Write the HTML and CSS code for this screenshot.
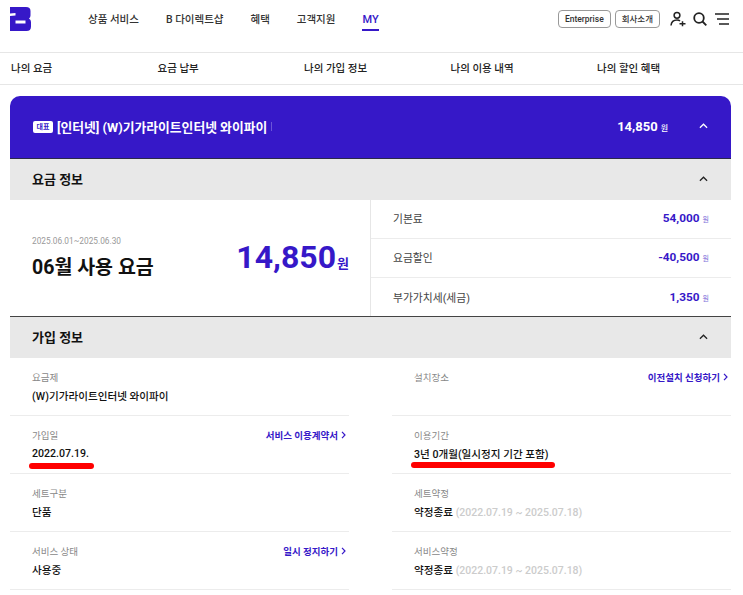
FILE: index.html
```html
<!DOCTYPE html>
<html lang="ko">
<head>
    <meta charset="UTF-8">
    <meta name="viewport" content="width=device-width, initial-scale=1.0">
    <title>MY 요금</title>
    <link rel="stylesheet" href="styles.css">
</head>
<body>
    <header class="header">
        <svg class="logo" viewBox="0 0 21 24"><path fill-rule="evenodd" fill="#3618c8" d="M0 0H16Q20.500 0 20.500 4V8.500Q20.500 10.500 19 11.500Q21 12.500 21 15V19.500Q21 24 16.500 24H0V9L5.500 8.500V6L0 6.500ZM5.500 13.500V16.500H15.500V13.500Z"/></svg>
        <nav class="gnb">
            <a>상품 서비스</a>
            <a>B 다이렉트샵</a>
            <a>혜택</a>
            <a>고객지원</a>
            <a class="on">MY</a>
        </nav>
        <div class="util">
            <span class="chip">Enterprise</span>
            <span class="chip">회사소개</span>
            <svg class="ico user" viewBox="0 0 16 16" fill="none" stroke="#222" stroke-width="1.500"><circle cx="7" cy="4.300" r="2.900"/><path d="M1 14.500Q1.500 9 7 9Q9 9 10 10"/><path d="M9.500 12.700H15.500M12.500 10.200V15.200"/></svg>
            <svg class="ico search" viewBox="0 0 14 14" fill="none" stroke="#222" stroke-width="1.800"><circle cx="6" cy="6" r="4.800"/><path d="M9.500 9.500L13.300 13.300"/></svg>
            <svg class="ico menu" viewBox="0 0 14 12" fill="none" stroke="#222" stroke-width="1.500"><path d="M0 1H14M2 6H14M4 11H14"/></svg>
        </div>
    </header>

    <nav class="lnb">
        <a>나의 요금</a>
        <a>요금 납부</a>
        <a>나의 가입 정보</a>
        <a>나의 이용 내역</a>
        <a>나의 할인 혜택</a>
    </nav>

    <main class="card">
        <div class="card-head">
            <span class="badge">대표</span>
            <span class="product">[인터넷] (W)기가라이트인터넷 와이파이</span>
            <i class="bar"></i>
            <span class="head-price">14,850<small>원</small></span>
            <svg class="chev head-chev" viewBox="0 0 10 6"><path d="M1 5L5 1L9 5"/></svg>
        </div>

        <section>
            <div class="sec-title">
                <h2>요금 정보</h2>
                <svg class="chev" viewBox="0 0 10 6"><path d="M1 5L5 1L9 5"/></svg>
            </div>
            <div class="fee">
                <div class="fee-total">
                    <div>
                        <p class="period">2025.06.01~2025.06.30</p>
                        <p class="fee-name">06월 사용 요금</p>
                    </div>
                    <p class="fee-sum">14,850<small>원</small></p>
                </div>
                <ul class="fee-list">
                    <li><span>기본료</span><b>54,000<small>원</small></b></li>
                    <li><span>요금할인</span><b>-40,500<small>원</small></b></li>
                    <li><span>부가가치세(세금)</span><b>1,350<small>원</small></b></li>
                </ul>
            </div>
        </section>

        <section class="join">
            <div class="sec-title">
                <h2>가입 정보</h2>
                <svg class="chev" viewBox="0 0 10 6"><path d="M1 5L5 1L9 5"/></svg>
            </div>
            <div class="join-grid">
                <div class="row">
                    <div class="label">요금제</div>
                    <div class="value">(W)기가라이트인터넷 와이파이</div>
                </div>
                <div class="row">
                    <div class="label">설치장소</div>
                    <a class="link">이전설치 신청하기<svg viewBox="0 0 5 8"><path d="M1 .8L4 4L1 7.200"/></svg></a>
                </div>
                <div class="row">
                    <div class="label">가입일</div>
                    <a class="link">서비스 이용계약서<svg viewBox="0 0 5 8"><path d="M1 .8L4 4L1 7.200"/></svg></a>
                    <div class="value">2022.07.19.<i class="mark mark-date"></i></div>
                </div>
                <div class="row">
                    <div class="label">이용기간</div>
                    <div class="value">3년 0개월(일시정지 기간 포함)<i class="mark mark-term"></i></div>
                </div>
                <div class="row">
                    <div class="label">세트구분</div>
                    <div class="value">단품</div>
                </div>
                <div class="row">
                    <div class="label">세트약정</div>
                    <div class="value">약정종료 <span class="dim">(2022.07.19 ~ 2025.07.18)</span></div>
                </div>
                <div class="row">
                    <div class="label">서비스 상태</div>
                    <a class="link">일시 정지하기<svg viewBox="0 0 5 8"><path d="M1 .8L4 4L1 7.200"/></svg></a>
                    <div class="value">사용중</div>
                </div>
                <div class="row">
                    <div class="label">서비스약정</div>
                    <div class="value">약정종료 <span class="dim">(2022.07.19 ~ 2025.07.18)</span></div>
                </div>
            </div>
        </section>
    </main>
</body>
</html>
```
FILE: styles.css
```css
*{
    margin: 0;
    padding: 0;
    box-sizing: border-box;
}
body{
    font-family: Roboto, "Noto Sans CJK KR", sans-serif;
    color: #111;
    background-color: #fff;
    height: 595px;
    overflow: hidden;
}
ul{
    list-style: none;
}
.header{
    height: 53px;
    border-bottom: 1px solid #e6e6e6;
    display: flex;
    align-items: flex-start;
    padding-left: 10px;
}
.logo{
    width: 21px;
    height: 24px;
    margin-top: 7px;
}
.gnb{
    display: flex;
    gap: 27px;
    margin-left: 57px;
    font-size: 10.500px;
    font-weight: 500;
    color: #333;
}
.gnb a{
    height: 31px;
    line-height: 39px;
    white-space: nowrap;
}
.gnb .on{
    color: #3618c8;
    font-size: 11px;
    border-bottom: 2px solid #3618c8;
}
.util{
    display: flex;
    align-items: center;
    margin-left: auto;
    margin-top: 10px;
    padding-right: 14px;
}
.chip{
    height: 18px;
    line-height: 16px;
    border: 1px solid #999;
    border-radius: 4px;
    padding: 0 6px;
    font-size: 8.500px;
    font-weight: 500;
    color: #333;
    margin-right: 4px;
}
.ico{
    display: block;
}
.user{
    width: 16px;
    height: 16px;
    margin-left: 6px;
}
.search{
    width: 14px;
    height: 14px;
    margin-left: 7px;
}
.menu{
    width: 14px;
    height: 12px;
    margin-left: 8px;
}
.lnb{
    height: 32px;
    border-bottom: 1px solid #e6e6e6;
    display: grid;
    grid-template-columns: repeat(5, 146.500px);
    padding-left: 11px;
    font-size: 10.500px;
    font-weight: 500;
    line-height: 32px;
    color: #222;
}
.card{
    margin: 11px 12px 0 10px;
}
.card-head{
    height: 63px;
    background-color: #3618c8;
    border-bottom: 1px solid #2a2a4a;
    border-radius: 10px 10px 0 0;
    display: flex;
    align-items: center;
    padding: 0 23px 2px 23px;
    color: #fff;
}
.badge{
    width: 20px;
    height: 12px;
    line-height: 12px;
    margin-top: 1px;
    background-color: #fff;
    border-radius: 2px;
    color: #3618c8;
    font-size: 7px;
    font-weight: 700;
    text-align: center;
}
.product{
    margin-left: 4px;
    font-size: 12.800px;
    font-weight: 700;
}
.bar{
    width: 1px;
    height: 9px;
    background-color: #6a55d8;
    margin-left: 4px;
}
.head-price{
    margin-left: auto;
    font-size: 13px;
    font-weight: 700;
}
.head-price small{
    font-size: 8px;
    font-weight: 500;
    margin-left: 3px;
}
.chev{
    width: 9px;
    height: 6px;
    fill: none;
    stroke: #222;
    stroke-width: 1.400;
}
.head-chev{
    stroke: #fff;
    margin-left: 31px;
}
.sec-title{
    height: 41px;
    background-color: #e8e8e8;
    display: flex;
    align-items: center;
    justify-content: space-between;
    padding: 0 23px 2px 22px;
}
.sec-title h2{
    font-size: 13px;
    font-weight: 700;
}
.fee{
    height: 116px;
    display: flex;
}
.fee-total{
    width: 361px;
    border-right: 1px solid #e6e6e6;
    display: flex;
    align-items: center;
    justify-content: space-between;
    padding: 0 21px 0 22px;
}
.period{
    font-size: 8.300px;
    color: #999;
    margin-bottom: 5px;
}
.fee-name{
    font-size: 19.500px;
    font-weight: 700;
}
.fee-sum{
    color: #3618c8;
    font-size: 32px;
    font-weight: 700;
    margin-bottom: 2px;
}
.fee-sum small{
    font-size: 13px;
    font-weight: 700;
    margin-left: 1px;
}
.fee-list{
    flex: 1;
}
.fee-list li{
    height: 39px;
    border-bottom: 1px solid #ececec;
    display: flex;
    align-items: center;
    justify-content: space-between;
    padding: 0 22px 2px 22px;
    font-size: 10.800px;
    color: #444;
}
.fee-list li:last-child{
    border-bottom: 0;
}
.fee-list b{
    color: #3618c8;
    font-size: 11.800px;
    font-weight: 700;
}
.fee-list small{
    font-size: 7px;
    font-weight: 400;
    color: #7a6ad8;
    margin-left: 3px;
}
.join{
    border-top: 1px solid #444;
}
.join-grid{
    display: grid;
    grid-template-columns: 339px 339px;
    column-gap: 43px;
}
.row{
    height: 58px;
    border-bottom: 1px solid #ececec;
    padding: 10px 3px 0 22px;
    display: grid;
    grid-template-columns: 1fr auto;
    grid-template-rows: 17px 20px;
    align-items: center;
}
.label{
    font-size: 9.500px;
    color: #888;
}
.value{
    grid-column: 1 / 3;
    grid-row: 2;
    font-size: 10.600px;
    font-weight: 500;
    color: #111;
    position: relative;
}
.dim{
    color: #ccc;
    font-size: 10.500px;
}
.link{
    font-size: 9.500px;
    font-weight: 700;
    color: #3618c8;
    display: flex;
    align-items: center;
}
.link svg{
    width: 5px;
    height: 8px;
    margin-left: 3px;
    fill: none;
    stroke: #3618c8;
    stroke-width: 1.200;
}
/* 빨간 밑줄 표시 */
.mark{
    position: absolute;
    left: -3px;
    top: 16px;
    height: 6px;
    border-radius: 3px;
    background-color: #f00;
}
.mark-date{
    width: 65px;
}
.mark-term{
    width: 144px;
}
```
